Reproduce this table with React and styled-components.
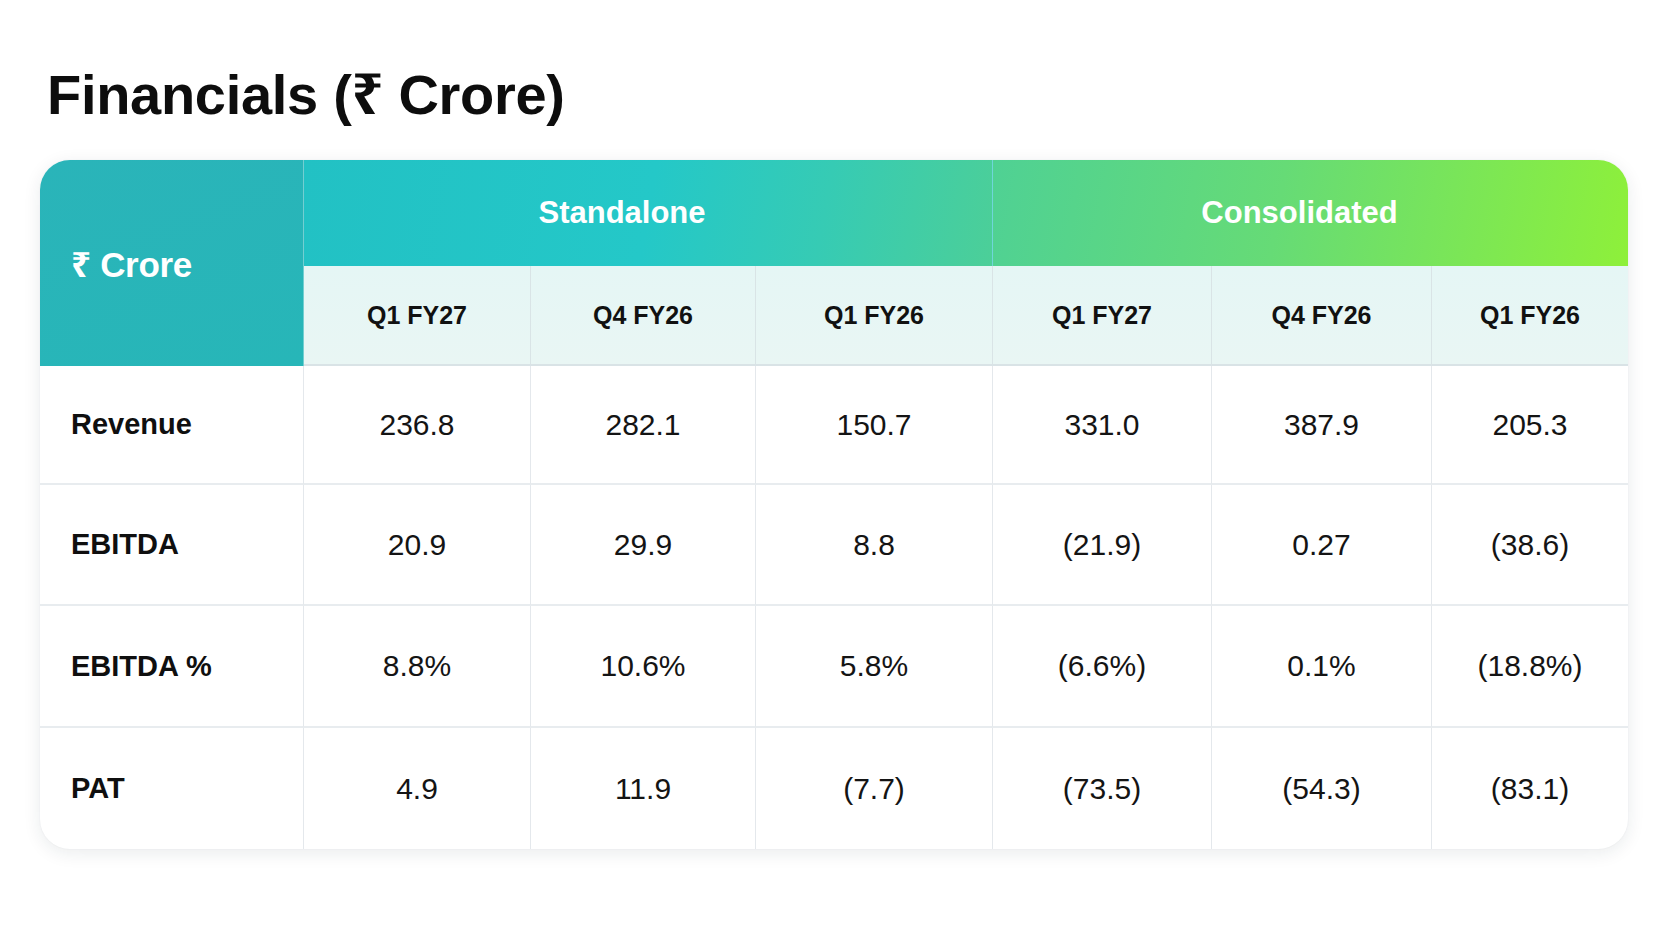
import React from "react";
import styled, { createGlobalStyle } from "styled-components";

const GlobalStyle = createGlobalStyle`
  html, body {
    margin: 0;
    padding: 0;
    background: #ffffff;
  }
  body {
    font-family: "Liberation Sans", Arial, "Noto Sans", sans-serif;
    color: #111111;
  }
`;

const Page = styled.div`
  width: 1668px;
  height: 943px;
  padding: 62px 40px 0 40px;
  box-sizing: border-box;
`;

const Title = styled.h1`
  margin: 0 0 32px 7px;
  font-size: 56px;
  line-height: 66px;
  font-weight: 700;
  letter-spacing: -0.3px;
  color: #0d0d0d;
`;

const Table = styled.div`
  display: grid;
  grid-template-columns: 264px 227px 225px 237px 219px 220px 196px;
  grid-template-rows: 106px 100px 119px 121px 122px 121px;
  width: 1588px;
  border-radius: 30px;
  overflow: hidden;
  background: #ffffff;
  box-shadow: 0 4px 18px rgba(20, 40, 60, 0.09), 0 0 2px rgba(20, 40, 60, 0.06);
`;

const Corner = styled.div`
  grid-row: 1 / span 2;
  display: flex;
  align-items: center;
  padding-left: 31px;
  background: linear-gradient(160deg, #2ab4b9 0%, #27b6b8 100%);
  color: #ffffff;
  font-size: 35px;
  font-weight: 700;
  letter-spacing: -0.3px;
  border-right: 1px solid rgba(255, 255, 255, 0.35);
`;

const Group = styled.div`
  grid-column: span 3;
  display: flex;
  align-items: center;
  justify-content: center;
  padding-right: ${(p) => p.$nudge || 0}px;
  color: #ffffff;
  font-size: 31px;
  font-weight: 700;
  background: ${(p) =>
    p.$tone === "green"
      ? "linear-gradient(100deg, #4fd194 0%, #66db76 45%, #8ef03a 100%)"
      : "linear-gradient(100deg, #22c1c4 0%, #24c8c8 50%, #36cbb4 75%, #4ccf98 100%)"};
  border-right: ${(p) => (p.$tone === "green" ? "none" : "1px solid rgba(255,255,255,0.35)")};
`;

const SubHead = styled.div`
  display: flex;
  align-items: center;
  justify-content: center;
  font-size: 25px;
  font-weight: 700;
  color: #111111;
  background: linear-gradient(180deg, #e5f6f5 0%, #e9f6f4 100%);
  border-right: ${(p) => (p.$edge ? "none" : "1px solid #d9e4e6")};
  border-bottom: 2px solid #d9e3e6;
`;

const Label = styled.div`
  display: flex;
  align-items: center;
  padding-left: 31px;
  font-size: 29px;
  font-weight: 700;
  color: #0f0f0f;
  border-right: 1px solid #e4e8ec;
  border-bottom: ${(p) => (p.$bottom ? "none" : "2px solid #e8ecef")};
`;

const Value = styled.div`
  display: flex;
  align-items: center;
  justify-content: center;
  font-size: 30px;
  font-weight: 400;
  color: #141414;
  border-right: ${(p) => (p.$edge ? "none" : "1px solid #e4e8ec")};
  border-bottom: ${(p) => (p.$bottom ? "none" : "2px solid #e8ecef")};
`;

const periods = ["Q1 FY27", "Q4 FY26", "Q1 FY26", "Q1 FY27", "Q4 FY26", "Q1 FY26"];

const rows = [
  { label: "Revenue", values: ["236.8", "282.1", "150.7", "331.0", "387.9", "205.3"] },
  { label: "EBITDA", values: ["20.9", "29.9", "8.8", "(21.9)", "0.27", "(38.6)"] },
  { label: "EBITDA %", values: ["8.8%", "10.6%", "5.8%", "(6.6%)", "0.1%", "(18.8%)"] },
  { label: "PAT", values: ["4.9", "11.9", "(7.7)", "(73.5)", "(54.3)", "(83.1)"] },
];

const App = () => {
  return (
    <>
      <GlobalStyle />
      <Page>
        <Title>Financials (₹ Crore)</Title>
        <Table>
          <Corner>₹ Crore</Corner>
          <Group $tone="teal" $nudge={52}>Standalone</Group>
          <Group $tone="green" $nudge={22}>Consolidated</Group>
          {periods.map((p, i) => (
            <SubHead key={i} $edge={i === periods.length - 1}>
              {p}
            </SubHead>
          ))}
          {rows.map((row, r) => (
            <React.Fragment key={row.label}>
              <Label $bottom={r === rows.length - 1}>{row.label}</Label>
              {row.values.map((v, i) => (
                <Value
                  key={i}
                  $edge={i === row.values.length - 1}
                  $bottom={r === rows.length - 1}
                >
                  {v}
                </Value>
              ))}
            </React.Fragment>
          ))}
        </Table>
      </Page>
    </>
  );
};

export default App;
